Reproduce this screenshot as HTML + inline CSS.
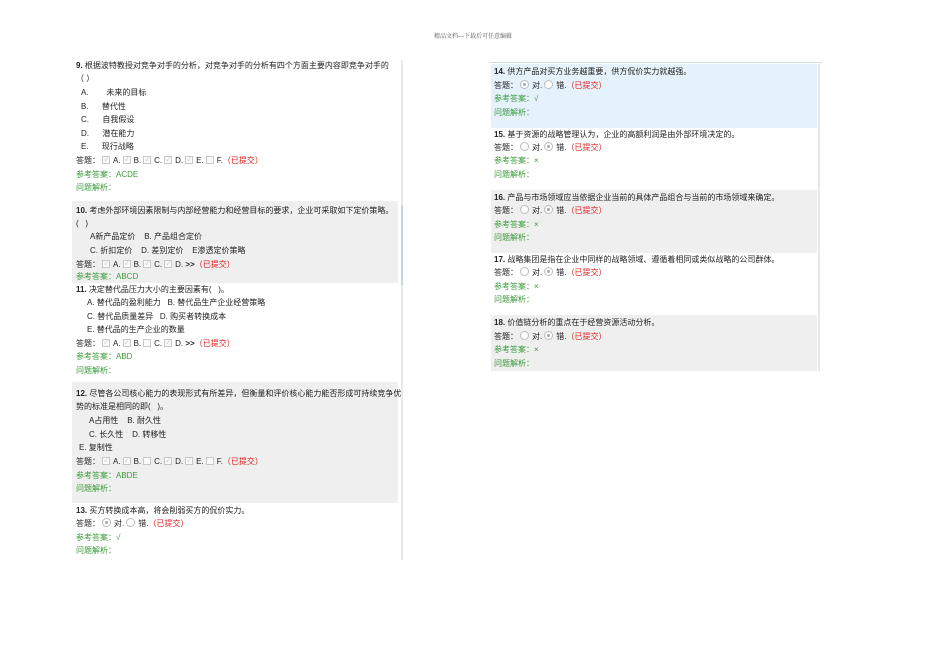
<!DOCTYPE html><html><head><meta charset="utf-8"><style>
body{margin:0;width:950px;height:672px;background:#fff;position:relative;overflow:hidden;font-family:"Liberation Sans","Noto Sans CJK SC",sans-serif;font-size:8px;color:#222}
.l{position:absolute;white-space:nowrap;line-height:12px}
.g{color:#3a9a3a}.r{color:#e02020}
.bg{position:absolute}
.cb{display:inline-block;width:6px;height:6px;border:1px solid #c8c8c8;vertical-align:middle;margin:-2px 3px 0 2px;font-size:5px;line-height:6px;text-align:center;color:#aaa;background:#fafafa;overflow:hidden}
.rd{display:inline-block;width:7px;height:7px;border:1px solid #bbb;border-radius:50%;vertical-align:middle;margin:-2px 3px 0 2px;position:relative;background:#fff}
.rd.on:after{content:"";position:absolute;left:2px;top:2px;width:3px;height:3px;border-radius:50%;background:#aaa}
b{font-weight:bold}
</style></head><body>
<div class="l" style="left:434px;top:31px;font-size:6px;color:#555;font-family:'Liberation Serif','Noto Serif CJK SC',serif">精品文档---下载后可任意编辑</div>

<div class="bg" style="left:72px;top:201px;width:326px;height:82px;background:#efefef"></div>
<div class="bg" style="left:72px;top:382px;width:326px;height:121px;background:#efefef"></div>
<div class="bg" style="left:401px;top:60px;width:2px;height:500px;background:#e6e8ee"></div>
<div class="bg" style="left:401px;top:205px;width:2px;height:80px;background:#c8d2ea"></div>

<div class="l" style="left:76px;top:60px"><b>9.</b> 根据波特教授对竞争对手的分析，对竞争对手的分析有四个方面主要内容即竞争对手的</div>
<div class="l" style="left:76px;top:73px">（ ）</div>
<div class="l" style="left:81px;top:87px">A.&nbsp;&nbsp;&nbsp;&nbsp;&nbsp;&nbsp;&nbsp;&nbsp;未来的目标</div>
<div class="l" style="left:81px;top:101px">B.&nbsp;&nbsp;&nbsp;&nbsp;&nbsp;&nbsp;替代性</div>
<div class="l" style="left:81px;top:114px">C.&nbsp;&nbsp;&nbsp;&nbsp;&nbsp;&nbsp;自我假设</div>
<div class="l" style="left:81px;top:128px">D.&nbsp;&nbsp;&nbsp;&nbsp;&nbsp;&nbsp;潜在能力</div>
<div class="l" style="left:81px;top:141px">E.&nbsp;&nbsp;&nbsp;&nbsp;&nbsp;&nbsp;现行战略</div>
<div class="l" style="left:76px;top:155px">答题：<span class="cb">✓</span>A.<span class="cb">✓</span>B.<span class="cb">✓</span>C.<span class="cb">✓</span>D.<span class="cb">✓</span>E.<span class="cb"></span>F.<span class="r">（已提交）</span></div>
<div class="l g" style="left:76px;top:169px">参考答案：ACDE</div>
<div class="l g" style="left:76px;top:182px">问题解析：</div>

<div class="l" style="left:76px;top:205px"><b>10.</b> 考虑外部环境因素限制与内部经营能力和经营目标的要求，企业可采取如下定价策略。</div>
<div class="l" style="left:76px;top:218px">(&nbsp;&nbsp;&nbsp;)</div>
<div class="l" style="left:90px;top:231px">A新产品定价&nbsp;&nbsp;&nbsp;&nbsp;B. 产品组合定价</div>
<div class="l" style="left:90px;top:245px">C. 折扣定价&nbsp;&nbsp;&nbsp;&nbsp;D. 差别定价&nbsp;&nbsp;&nbsp;&nbsp;E渗透定价策略</div>
<div class="l" style="left:76px;top:259px">答题：<span class="cb">✓</span>A.<span class="cb">✓</span>B.<span class="cb">✓</span>C.<span class="cb">✓</span>D.&nbsp;<b>&gt;&gt;</b><span class="r">（已提交）</span></div>
<div class="l g" style="left:76px;top:271px">参考答案：ABCD</div>

<div class="l" style="left:76px;top:284px"><b>11.</b> 决定替代品压力大小的主要因素有(&nbsp;&nbsp;&nbsp;)。</div>
<div class="l" style="left:87px;top:297px">A. 替代品的盈利能力&nbsp;&nbsp;&nbsp;B. 替代品生产企业经营策略</div>
<div class="l" style="left:87px;top:311px">C. 替代品质量差异&nbsp;&nbsp;&nbsp;D. 购买者转换成本</div>
<div class="l" style="left:87px;top:324px">E. 替代品的生产企业的数量</div>
<div class="l" style="left:76px;top:338px">答题：<span class="cb">✓</span>A.<span class="cb">✓</span>B.<span class="cb"></span>C.<span class="cb">✓</span>D.&nbsp;<b>&gt;&gt;</b><span class="r">（已提交）</span></div>
<div class="l g" style="left:76px;top:351px">参考答案：ABD</div>
<div class="l g" style="left:76px;top:365px">问题解析：</div>

<div class="l" style="left:76px;top:388px"><b>12.</b> 尽管各公司核心能力的表现形式有所差异，但衡量和评价核心能力能否形成可持续竞争优</div>
<div class="l" style="left:76px;top:401px">势的标准是相同的即(&nbsp;&nbsp;&nbsp;)。</div>
<div class="l" style="left:89px;top:415px">A占用性&nbsp;&nbsp;&nbsp;&nbsp;B. 耐久性</div>
<div class="l" style="left:89px;top:429px">C. 长久性&nbsp;&nbsp;&nbsp;&nbsp;D. 转移性</div>
<div class="l" style="left:79px;top:442px">E. 复制性</div>
<div class="l" style="left:76px;top:456px">答题：<span class="cb">✓</span>A.<span class="cb">✓</span>B.<span class="cb"></span>C.<span class="cb">✓</span>D.<span class="cb">✓</span>E.<span class="cb"></span>F.<span class="r">（已提交）</span></div>
<div class="l g" style="left:76px;top:470px">参考答案：ABDE</div>
<div class="l g" style="left:76px;top:483px">问题解析：</div>

<div class="l" style="left:76px;top:505px"><b>13.</b> 买方转换成本高，将会削弱买方的侃价实力。</div>
<div class="l" style="left:76px;top:518px">答题：<span class="rd on"></span>对.<span class="rd"></span>错.<span class="r">（已提交）</span></div>
<div class="l g" style="left:76px;top:532px">参考答案：√</div>
<div class="l g" style="left:76px;top:545px">问题解析：</div>

<div class="bg" style="left:489px;top:62px;width:333px;height:1px;background:#cfdbe8"></div>
<div class="bg" style="left:491px;top:64px;width:326px;height:64px;background:#e5f1fb"></div>
<div class="bg" style="left:491px;top:190px;width:326px;height:63px;background:#efefef"></div>
<div class="bg" style="left:491px;top:315px;width:326px;height:56px;background:#efefef"></div>
<div class="bg" style="left:818px;top:64px;width:2px;height:307px;background:#e6e8ee"></div>

<div class="l" style="left:494px;top:66px"><b>14.</b> 供方产品对买方业务越重要，供方侃价实力就越强。</div>
<div class="l" style="left:494px;top:80px">答题：<span class="rd on"></span>对.<span class="rd"></span>错.<span class="r">（已提交）</span></div>
<div class="l g" style="left:494px;top:93px">参考答案：√</div>
<div class="l g" style="left:494px;top:107px">问题解析：</div>

<div class="l" style="left:494px;top:129px"><b>15.</b> 基于资源的战略管理认为，企业的高额利润是由外部环境决定的。</div>
<div class="l" style="left:494px;top:142px">答题：<span class="rd"></span>对.<span class="rd on"></span>错.<span class="r">（已提交）</span></div>
<div class="l g" style="left:494px;top:155px">参考答案：×</div>
<div class="l g" style="left:494px;top:169px">问题解析：</div>

<div class="l" style="left:494px;top:192px"><b>16.</b> 产品与市场领域应当依据企业当前的具体产品组合与当前的市场领域来确定。</div>
<div class="l" style="left:494px;top:205px">答题：<span class="rd"></span>对.<span class="rd on"></span>错.<span class="r">（已提交）</span></div>
<div class="l g" style="left:494px;top:219px">参考答案：×</div>
<div class="l g" style="left:494px;top:232px">问题解析：</div>

<div class="l" style="left:494px;top:254px"><b>17.</b> 战略集团是指在企业中同样的战略领域、遵循着相同或类似战略的公司群体。</div>
<div class="l" style="left:494px;top:267px">答题：<span class="rd"></span>对.<span class="rd on"></span>错.<span class="r">（已提交）</span></div>
<div class="l g" style="left:494px;top:281px">参考答案：×</div>
<div class="l g" style="left:494px;top:294px">问题解析：</div>

<div class="l" style="left:494px;top:317px"><b>18.</b> 价值链分析的重点在于经营资源活动分析。</div>
<div class="l" style="left:494px;top:331px">答题：<span class="rd"></span>对.<span class="rd on"></span>错.<span class="r">（已提交）</span></div>
<div class="l g" style="left:494px;top:344px">参考答案：×</div>
<div class="l g" style="left:494px;top:358px">问题解析：</div>
</body></html>
